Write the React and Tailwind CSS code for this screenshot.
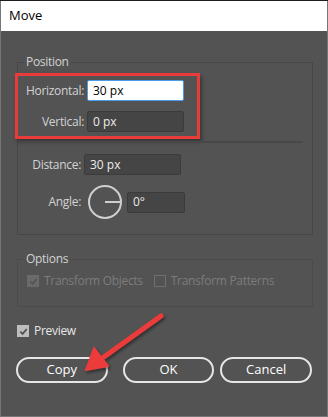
import React from "react";

const font = { fontFamily: '"Open Sans", "Liberation Sans", sans-serif' };

function Field({ value, active, className = "w-[97px]" }) {
  return (
    <div
      className={`${className} h-[21px] flex items-center px-[5px] text-[12px] rounded-[2px] border ${
        active
          ? "bg-white border-[#4b9be8] text-black"
          : "bg-[#454545] border-[#3b3b3b] text-[#ececec]"
      }`}
    >
      {value}
    </div>
  );
}

function Row({ label, children, className = "" }) {
  return (
    <div className={`flex items-center ${className}`}>
      <span className="w-[66px] text-right text-[12px] tracking-[-0.3px] text-[#d2d2d2] pr-[3px]">{label}</span>
      {children}
    </div>
  );
}

function Check({ checked, disabled }) {
  return (
    <span
      className={`w-[12px] h-[12px] flex items-center justify-center border ${
        checked
          ? disabled
            ? "bg-[#6a6a6a] border-[#6a6a6a]"
            : "bg-[#bdbdbd] border-[#bdbdbd]"
          : "border-[#6f6f6f]"
      }`}
    >
      {checked && (
        <svg width="9" height="9" viewBox="0 0 10 10">
          <path
            d="M1.5 5.2 L4 7.6 L8.6 2.2"
            fill="none"
            stroke={disabled ? "#555" : "#535353"}
            strokeWidth="2"
          />
        </svg>
      )}
    </span>
  );
}

function Btn({ children, className = "" }) {
  return (
    <button className={`h-[26px] w-[92px] rounded-full border-2 border-[#e6e6e6] text-[13px] text-white ${className}`}>
      {children}
    </button>
  );
}

export default function App() {
  return (
    <div className="w-[328px] h-[417px] bg-[#1e1e1e] pt-[1px] flex flex-col" style={font}>
      <div className="flex-1 flex flex-col border-l border-r border-b border-[#767676]">
        <div className="h-[30px] bg-white flex items-center pl-[8px] text-[13px] text-black">Move</div>
        <div className="flex-1 bg-[#535353] px-[15px] pt-[23px]">
          <fieldset className="border border-[#474747] h-[181px] px-0 pb-0 w-[296px] ml-[1px]">
            <legend className="ml-[6px] px-[2px] text-[12px] tracking-[-0.3px] leading-[16px] text-[#d2d2d2]">Position</legend>
            <div className="-ml-[3px] mt-[3px] w-[185px] h-[66px] border-[3px] border-[#ea3b3b] shadow-[2px_3px_4px_rgba(0,0,0,0.35)] pt-[4px] flex flex-col gap-[10px]">
              <Row label="Horizontal:" className="pl-[3px]">
                <Field value="30 px" active />
              </Row>
              <Row label="Vertical:" className="pl-[3px]">
                <Field value="0 px" />
              </Row>
            </div>
            <div className="mt-[2px] w-[285px] h-[2px] bg-[#484848]" />
            <Row label="Distance:" className="mt-[11px]">
              <Field value="30 px" />
            </Row>
            <Row label="Angle:" className="mt-[8px]">
              <svg width="38" height="38" viewBox="0 0 38 38" className="ml-[2px]">
                <circle cx="19" cy="19" r="16" fill="none" stroke="#cfcfcf" strokeWidth="2" />
                <line x1="19" y1="19" x2="35" y2="19" stroke="#cfcfcf" strokeWidth="2" />
              </svg>
              <Field value="0°" className="w-[58px] ml-[3px]" />
            </Row>
          </fieldset>

          <fieldset className="mt-[16px] border border-[#4b4b4b] h-[56px] w-[296px] ml-[1px] px-[9px]">
            <legend className="ml-[-3px] px-[2px] text-[12px] tracking-[-0.3px] leading-[16px] text-[#d2d2d2]">Options</legend>
            <div className="flex items-center mt-[5px] text-[12px] tracking-[-0.3px] text-[#7c7c7c]">
              <Check checked disabled />
              <span className="ml-[5px]">Transform Objects</span>
              <span className="ml-[11px]" />
              <Check />
              <span className="ml-[5px]">Transform Patterns</span>
            </div>
          </fieldset>

          <div className="flex items-center mt-[15px] ml-[1px]">
            <Check checked />
            <span className="ml-[5px] text-[12px] tracking-[-0.3px] text-[#e6e6e6]">Preview</span>
          </div>

          <div className="flex mt-[17px]">
            <Btn>Copy</Btn>
            <Btn className="ml-[15px] w-[91px]">OK</Btn>
            <Btn className="ml-[6px]">Cancel</Btn>
          </div>
        </div>
      </div>

      <svg
        className="absolute left-0 top-0 pointer-events-none"
        width="328"
        height="417"
        viewBox="0 0 328 417"
      >
        <defs>
          <filter id="sh" x="-20%" y="-20%" width="140%" height="140%">
            <feDropShadow dx="1.5" dy="2" stdDeviation="1.5" floodColor="#000" floodOpacity="0.45" />
          </filter>
        </defs>
        <g filter="url(#sh)" fill="#ec3b3b" stroke="#ec3b3b">
          <line x1="161" y1="316" x2="101" y2="359" strokeWidth="5" strokeLinecap="round" />
          <polygon points="86,370 94,348 108,366" strokeWidth="2" strokeLinejoin="round" />
        </g>
      </svg>
    </div>
  );
}
